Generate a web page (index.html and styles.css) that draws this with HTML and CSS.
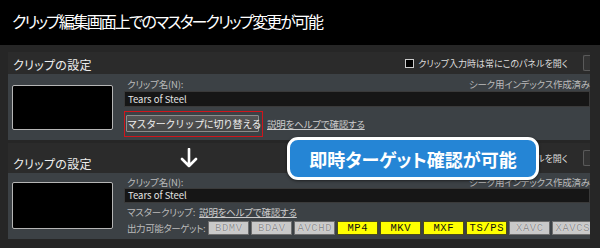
FILE: index.html
```html
<!DOCTYPE html>
<html lang="ja">
<head>
  <meta charset="UTF-8">
  <meta name="viewport" content="width=device-width, initial-scale=1.0">
  <title>クリップ編集画面</title>
  <link rel="stylesheet" href="styles.css">
</head>
<body>
  <div class="titlebar">
    <h1>クリップ編集画面上でのマスタークリップ変更が可能</h1>
  </div>

  <div class="settings">
    <div class="panel">
      <div class="panel-head">
        <span class="panel-title">クリップの設定</span>
        <div class="head-right">
          <span class="check"></span>
          <span class="check-label">クリップ入力時は常にこのパネルを開く</span>
          <span class="stub"></span>
        </div>
      </div>
      <div class="panel-body">
        <div class="thumb"></div>
        <div class="fields">
          <div class="label-row">
            <span>クリップ名(N):</span>
            <span>シーク用インデックス作成済み</span>
          </div>
          <div class="name-input">Tears of Steel</div>
          <div class="action-row">
            <div class="highlight">
              <button class="switch-btn">マスタークリップに切り替える</button>
            </div>
            <a class="help-link">説明をヘルプで確認する</a>
          </div>
        </div>
      </div>
    </div>

    <div class="panel panel-after">
      <div class="panel-head panel-head-tall">
        <span class="panel-title">クリップの設定</span>
        <div class="head-right">
          <span class="check"></span>
          <span class="check-label">クリップ入力時は常にこのパネルを開く</span>
          <span class="stub"></span>
        </div>
      </div>
      <div class="panel-body panel-body-after">
        <div class="thumb"></div>
        <div class="fields">
          <div class="label-row">
            <span>クリップ名(N):</span>
            <span>シーク用インデックス作成済み</span>
          </div>
          <div class="name-input">Tears of Steel</div>
          <div class="info-row">
            <span>マスタークリップ:</span>
            <a class="help-link">説明をヘルプで確認する</a>
          </div>
          <div class="info-row targets">
            <span class="targets-label">出力可能ターゲット:</span>
            <span class="chip">BDMV</span>
            <span class="chip">BDAV</span>
            <span class="chip">AVCHD</span>
            <span class="chip on">MP4</span>
            <span class="chip on">MKV</span>
            <span class="chip on">MXF</span>
            <span class="chip on">TS/PS</span>
            <span class="chip">XAVC</span>
            <span class="chip">XAVCS</span>
          </div>
        </div>
      </div>

      <svg class="down-arrow" width="18" height="20" viewBox="0 0 18 20">
        <path d="M9 1 V18 M2 11 L9 18 L16 11" fill="none" stroke="#fff" stroke-width="2.6" stroke-linecap="round" stroke-linejoin="round"/>
      </svg>
      <div class="callout">即時ターゲット確認が可能</div>
    </div>
  </div>
</body>
</html>
```

FILE: styles.css
```css
body {
  margin: 0;
  width: 600px;
  height: 248px;
  overflow: hidden;
  background-color: #262626;
  font-family: "Noto Sans CJK JP", "Noto Sans", sans-serif;
  font-feature-settings: "palt" 1;
}

.titlebar {
  height: 45px;
  background-color: #000;
  display: flex;
  align-items: center;
  padding-left: 12px;
}
.titlebar h1 {
  margin: 0 0 3px;
  color: #fff;
  font-size: 16px;
  font-weight: normal;
  letter-spacing: -2px;
}

.settings {
  padding: 7px 10px 0 8px;
}

.panel {
  background-color: #3c4145;
}
.panel-after {
  position: relative;
  margin-top: 3px;
}

.panel-head {
  height: 22px;
  background-color: #2b2b2b;
  display: flex;
  align-items: flex-end;
  justify-content: space-between;
  padding-left: 5px;
}
.panel-head-tall {
  height: 30px;
}
.panel-title {
  color: #eee;
  font-size: 12px;
  line-height: 16px;
  margin-bottom: 1px;
  letter-spacing: 0.3px;
}
.head-right {
  align-self: stretch;
  display: flex;
  align-items: center;
}
.check {
  width: 7px;
  height: 7px;
  background-color: #000;
  border: 1px solid #ccc;
  margin-right: 4px;
}
.check-label {
  color: #ddd;
  font-size: 9px;
}
.stub {
  width: 6px;
  height: 14px;
  margin-left: 15px;
  background-color: #333;
  border: 1px solid #5a5a5a;
  border-right: none;
  border-radius: 2px 0 0 2px;
}

.panel-body {
  display: flex;
  gap: 11px;
  padding: 4px 0 3px 4px;
}
.panel-body-after {
  padding: 3px 0 4px 4px;
}
.thumb {
  width: 99px;
  height: 43px;
  margin-top: 7px;
  background-color: #000;
  border: 1px solid #b5b5b5;
  border-radius: 2px;
}
.panel-body-after .thumb {
  margin-top: 6px;
  height: 45px;
}

.fields {
  flex: 1;
  min-width: 0;
  color: #bbb;
  font-size: 9.5px;
  letter-spacing: -0.2px;
}
.label-row {
  display: flex;
  justify-content: space-between;
  height: 12px;
  line-height: 12px;
  padding-left: 3px;
}
.name-input {
  margin-top: 1px;
  height: 14px;
  line-height: 14px;
  padding-left: 3px;
  background-color: #161616;
  border: 1px solid #3a3a3a;
  color: #e4e4e4;
  letter-spacing: 0;
}
.panel-body-after .name-input {
  margin-top: 0;
  height: 13px;
  line-height: 13px;
}

.action-row {
  display: flex;
  align-items: center;
  gap: 4px;
  margin-top: 4px;
}
.highlight {
  border: 1px solid #d0151b;
  padding: 3px 3px 4px 1px;
}
.switch-btn {
  display: block;
  width: 133px;
  height: 17px;
  padding: 0;
  white-space: nowrap;
  font-family: inherit;
  font-size: 10px;
  letter-spacing: -0.4px;
  color: #eee;
  background: linear-gradient(#555, #464646);
  border: 1px solid #8c8c8c;
  border-radius: 1px;
}
.help-link {
  color: #ccc;
  text-decoration: underline;
}

.info-row {
  display: flex;
  align-items: center;
  gap: 4px;
  margin-top: 3px;
  height: 12px;
  padding-left: 3px;
  white-space: nowrap;
}
.info-row > * {
  flex: none;
}
.targets {
  height: 14px;
  gap: 2px;
  overflow: hidden;
}
.targets-label {
  margin-right: 1px;
  letter-spacing: -0.4px;
}
.chip {
  width: 39px;
  height: 12px;
  line-height: 12px;
  overflow: hidden;
  font-family: "Liberation Mono", monospace;
  font-size: 10.5px;
  letter-spacing: 0.6px;
  color: #8f8f8f;
  text-shadow: 0 0 1px #fff;
  background-color: #c9c9c9;
  border: 1px solid #6e6e6e;
  text-align: center;
}
.chip.on {
  color: #111;
  text-shadow: none;
  background-color: #ffff00;
  border-color: #4d4d1a;
}

.down-arrow {
  position: absolute;
  left: 172px;
  top: 5px;
}

.callout {
  position: absolute;
  left: 279px;
  top: -6px;
  width: 246px;
  height: 37px;
  display: flex;
  align-items: center;
  justify-content: center;
  background-color: #2585d5;
  border: 3px solid #fff;
  border-radius: 11px;
  box-shadow: 0 1px 3px rgba(0, 0, 0, 0.5);
  color: #fff;
  font-size: 18px;
  font-weight: bold;
}
```
